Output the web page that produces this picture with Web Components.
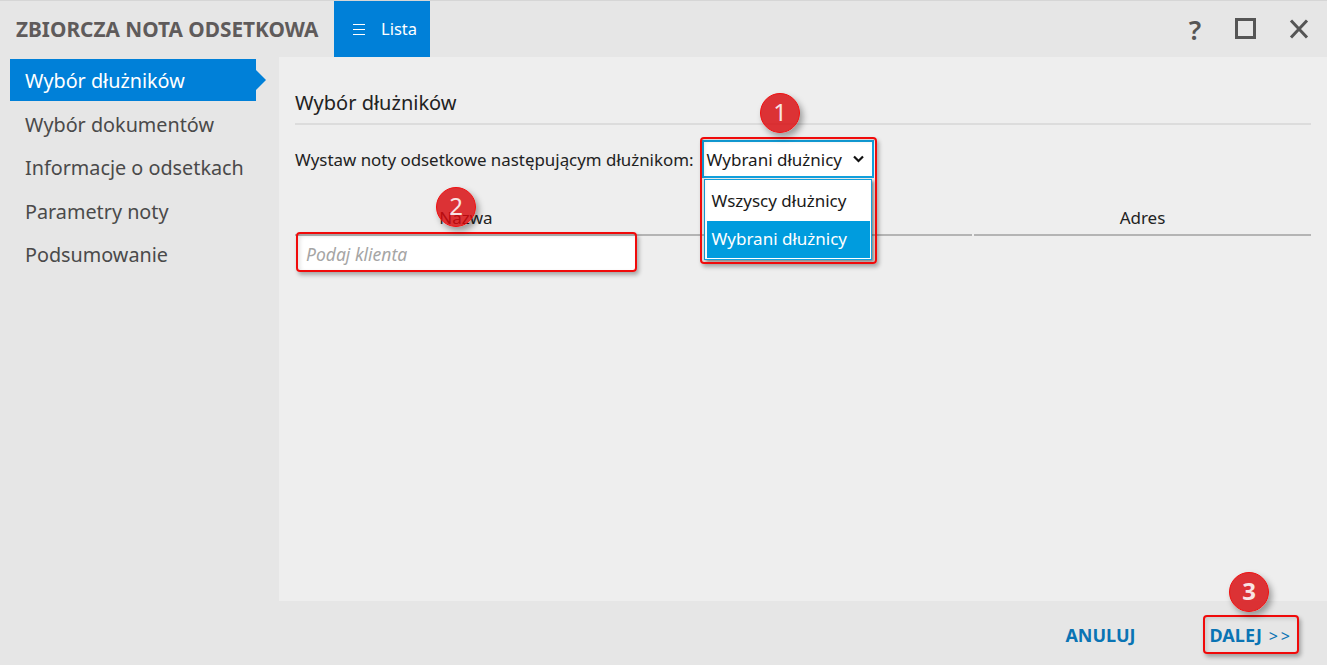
<!DOCTYPE html>
<html lang="pl">
<head>
<meta charset="utf-8">
<title>Zbiorcza nota odsetkowa</title>
<style>
  html, body { margin: 0; height: 100%; overflow: hidden; }
  body { font-family: "Noto Sans", "Open Sans", sans-serif; background: #eee; }
</style>
</head>
<body>
<app-window>
  <title-bar slot="top" heading="ZBIORCZA NOTA ODSETKOWA"></title-bar>
  <side-nav slot="side">
    <nav-item active>Wybór dłużników</nav-item>
    <nav-item>Wybór dokumentów</nav-item>
    <nav-item>Informacje o odsetkach</nav-item>
    <nav-item>Parametry noty</nav-item>
    <nav-item>Podsumowanie</nav-item>
  </side-nav>
  <debtor-page slot="main"></debtor-page>
  <footer-bar slot="bottom"></footer-bar>
</app-window>

<script>
class AppWindow extends HTMLElement {
  constructor() {
    super();
    this.attachShadow({ mode: "open" });
    this.shadowRoot.innerHTML = `
      <style>
        :host {
          display: grid;
          grid-template-columns: 279px 1fr;
          grid-template-rows: 57px 544px 64px;
          width: 1327px;
          height: 665px;
          background: #e6e6e6;
          position: relative;
          overflow: hidden;
        }
        .top { grid-column: 1 / 3; }
        .bottom { grid-column: 1 / 3; }
        .main { background: #eeeeee; min-width: 0; }
      </style>
      <div class="top"><slot name="top"></slot></div>
      <div><slot name="side"></slot></div>
      <div class="main"><slot name="main"></slot></div>
      <div class="bottom"><slot name="bottom"></slot></div>
    `;
  }
}

class TitleBar extends HTMLElement {
  constructor() {
    super();
    this.attachShadow({ mode: "open" });
  }
  connectedCallback() {
    this.shadowRoot.innerHTML = `
      <style>
        :host {
          display: flex;
          align-items: stretch;
          height: 57px;
          box-sizing: border-box;
          border-top: 1px solid #d6d6d6;
          padding-left: 16px;
          color: #5f5b5b;
        }
        h1 {
          margin: 0 15px 0 0;
          width: 303px;
          font-size: 20.8px;
          font-weight: 700;
          line-height: 56px;
          white-space: nowrap;
        }
        .list {
          display: flex;
          align-items: center;
          width: 96px;
          height: 56px;
          box-sizing: border-box;
          padding: 0 0 2px 19px;
          gap: 16px;
          background: #0080d8;
          color: #fff;
          font-size: 16.500px;
        }
        .list svg { flex: none; margin-top: 2px; }
        .tools {
          margin-left: auto;
          display: flex;
          align-items: center;
          padding-right: 17px;
        }
        .tools span { font-size: 27px; font-weight: 600; line-height: 1; color: #555; width: 22px; text-align: center; margin-right: 28px; }
        .tools svg + svg { margin-left: 32px; }
      </style>
      <h1>${this.getAttribute("heading")}</h1>
      <div class="list">
        <svg width="12" height="11" viewBox="0 0 12 11" stroke="#fff" stroke-width="1.2"><path d="M0 .500h12M0 5.500h12M0 10.500h12"/></svg>
        <span>Lista</span>
      </div>
      <div class="tools">
        <span>?</span>
        <svg width="22" height="22" viewBox="0 0 22 22" fill="none" stroke="#555" stroke-width="3"><rect x="2.500" y="1.500" width="18" height="18"/></svg>
        <svg width="22" height="22" viewBox="0 0 22 22" fill="none" stroke="#555" stroke-width="3"><path d="M3 2.500l16 17M19 2.500L3 19.500"/></svg>
      </div>
    `;
  }
}

class SideNav extends HTMLElement {
  constructor() {
    super();
    this.attachShadow({ mode: "open" });
    this.shadowRoot.innerHTML = `
      <style>
        :host { display: flex; flex-direction: column; padding: 2px 0 0 10px; gap: 1.500px; }
      </style>
      <slot></slot>
    `;
  }
}

class NavItem extends HTMLElement {
  constructor() {
    super();
    this.attachShadow({ mode: "open" });
    this.shadowRoot.innerHTML = `
      <style>
        :host {
          display: block;
          position: relative;
          width: 246px;
          height: 42px;
          box-sizing: border-box;
          padding-left: 15px;
          font-size: 19.800px;
          line-height: 43px;
          color: #4a4a4a;
          white-space: nowrap;
        }
        :host([active]) { background: #0080d8; color: #fff; }
        :host([active])::after {
          content: "";
          position: absolute;
          left: 100%;
          top: 11px;
          border-left: 10px solid #0080d8;
          border-top: 10px solid transparent;
          border-bottom: 10px solid transparent;
        }
      </style>
      <slot></slot>
    `;
  }
}

class DebtorPage extends HTMLElement {
  constructor() {
    super();
    this.attachShadow({ mode: "open" });
    this.shadowRoot.innerHTML = `
      <style>
        :host { display: block; padding: 31px 16px 0; color: #222; }
        h2 {
          margin: 0;
          height: 37px;
          font-size: 20px;
          font-weight: 400;
          line-height: 30px;
          border-bottom: 2px solid #dcdcdc;
          box-sizing: border-box;
          color: #222;
        }
        .row {
          display: flex;
          align-items: center;
          gap: 8px;
          height: 38px;
          margin-top: 15px;
          font-size: 16.900px;
          white-space: nowrap;
        }
        .cols {
          display: grid;
          grid-template-columns: 342px 335px 339px;
          margin-top: 27px;
          font-size: 17px;
          text-align: center;
        }
        .cols div { height: 31px; line-height: 26px; box-sizing: border-box; border-bottom: 2px solid #b4b4b4; }
        .cols div:last-child { margin-left: 2px; }
        .filter { margin: 0 0 0 3px; width: 337px; height: 35px; }
      </style>
      <h2>Wybór dłużników</h2>
      <div class="row">
        <span>Wystaw noty odsetkowe następującym dłużnikom:</span>
        <debtor-select></debtor-select>
      </div>
      <div class="cols"><div>Nazwa</div><div></div><div>Adres</div></div>
      <filter-input class="filter" placeholder="Podaj klienta"></filter-input>
      <step-badge style="left:436px;top:187px">2</step-badge>
      <step-badge style="left:760px;top:93px">1</step-badge>
      <red-frame style="left:296px;top:232px;width:341px;height:40px"></red-frame>
      <red-frame style="left:700px;top:137px;width:177px;height:127px"></red-frame>
    `;
  }
}

class DebtorSelect extends HTMLElement {
  constructor() {
    super();
    this.attachShadow({ mode: "open" });
    this.shadowRoot.innerHTML = `
      <style>
        :host {
          display: block;
          position: relative;
          flex: none;
          width: 172px;
          height: 38px;
          font-size: 17px;
          color: #1a1a1a;
        }
        .value {
          display: flex;
          align-items: center;
          justify-content: space-between;
          height: 38px;
          box-sizing: border-box;
          padding: 0 8px 0 3px;
          background: #fff;
          border: 2px solid #12a0dc;
        }
        .menu {
          position: absolute;
          left: 2px;
          top: 39px;
          width: 168px;
          height: 81px;
          box-sizing: border-box;
          background: #fff;
          border: 1px solid #12a0dc;
          padding: 2px 1px 2px 2px;
          box-shadow: 2px 2px 3px rgba(0,0,0,.45);
        }
        .opt { height: 39px; padding-left: 5px; line-height: 37px; }
        .opt.on { background: #009cde; color: #fff; height: 37px; line-height: 36px; }
      </style>
      <div class="value">
        <span>Wybrani dłużnicy</span>
        <svg width="11" height="8" viewBox="0 0 11 8" fill="none" stroke="#111" stroke-width="2.200"><path d="M1 1.500l4.500 4.500 4.500-4.500"/></svg>
      </div>
      <div class="menu">
        <div class="opt">Wszyscy dłużnicy</div>
        <div class="opt on">Wybrani dłużnicy</div>
      </div>
    `;
  }
}

class FilterInput extends HTMLElement {
  constructor() {
    super();
    this.attachShadow({ mode: "open" });
  }
  connectedCallback() {
    this.shadowRoot.innerHTML = `
      <style>
        :host {
          display: block;
          box-sizing: border-box;
          background: #fff;
          padding-left: 8px;
          line-height: 37px;
          font-size: 17.500px;
          font-style: italic;
          color: #a5a5a5;
        }
      </style>
      ${this.getAttribute("placeholder")}
    `;
  }
}

class StepBadge extends HTMLElement {
  constructor() {
    super();
    this.attachShadow({ mode: "open" });
    this.shadowRoot.innerHTML = `
      <style>
        :host {
          position: absolute;
          z-index: 5;
          width: 40px;
          height: 40px;
          box-sizing: border-box;
          border: 1.500px solid #f01010;
          border-radius: 50%;
          background: rgba(216, 8, 12, .82);
          color: #f8e4e4;
          font-size: 24px;
          line-height: 36px;
          text-align: center;
          box-shadow: 3px 4px 6px rgba(0,0,0,.35);
        }
      </style>
      <slot></slot>
    `;
  }
}

class RedFrame extends HTMLElement {
  constructor() {
    super();
    this.attachShadow({ mode: "open" });
    this.shadowRoot.innerHTML = `
      <style>
        :host {
          position: absolute;
          z-index: 4;
          box-sizing: border-box;
          border: 2px solid #f00a0a;
          border-radius: 4px;
          box-shadow: 2px 3px 4px rgba(0,0,0,.3), inset 2px 2px 4px rgba(0,0,0,.12);
          pointer-events: none;
        }
      </style>
    `;
  }
}

class FooterBar extends HTMLElement {
  constructor() {
    super();
    this.attachShadow({ mode: "open" });
    this.shadowRoot.innerHTML = `
      <style>
        :host {
          display: flex;
          justify-content: flex-end;
          align-items: center;
          gap: 74px;
          height: 64px;
          padding: 4px 34px 0 0;
          box-sizing: border-box;
          color: #0a74b4;
          font-size: 18px;
          font-weight: 700;
        }
        .more { font-weight: 400; letter-spacing: 3px; margin-left: 2px; font-size: 16px; }
      </style>
      <span>ANULUJ</span>
      <span>DALEJ <span class="more">&gt;&gt;</span></span>
      <step-badge style="left:1229px;top:572px">3</step-badge>
      <red-frame style="left:1203px;top:615px;width:96px;height:39px"></red-frame>
    `;
  }
}

customElements.define("app-window", AppWindow);
customElements.define("title-bar", TitleBar);
customElements.define("side-nav", SideNav);
customElements.define("nav-item", NavItem);
customElements.define("debtor-page", DebtorPage);
customElements.define("debtor-select", DebtorSelect);
customElements.define("filter-input", FilterInput);
customElements.define("step-badge", StepBadge);
customElements.define("red-frame", RedFrame);
customElements.define("footer-bar", FooterBar);
</script>
</body>
</html>
